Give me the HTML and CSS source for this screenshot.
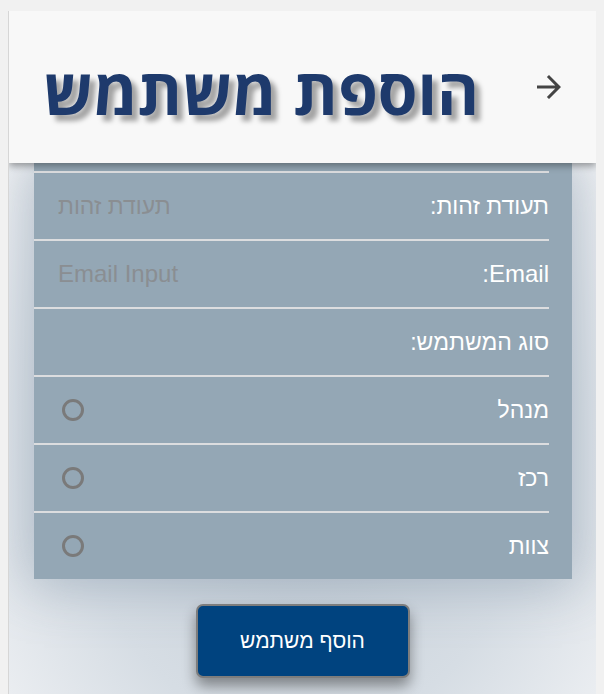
FILE: index.html
```html
<!DOCTYPE html>
<html lang="he" dir="rtl">
<head>
<meta charset="utf-8">
<title>הוספת משתמש</title>
<link rel="stylesheet" href="styles.css">
</head>
<body>
<div class="card">
  <header class="header">
    <button class="back" type="button" aria-label="חזרה">
      <svg viewBox="0 0 24 24" width="36" height="36"><path d="M12 4l-1.41 1.41L16.17 11H4v2h12.17l-5.58 5.59L12 20l8-8z"/></svg>
    </button>
    <h1 class="title">הוספת משתמש</h1>
  </header>
  <main class="content">
    <form class="form">
      <div class="row"><label class="label">תעודת זהות:</label><input class="field" type="text" placeholder="תעודת זהות"></div>
      <div class="row"><label class="label label-latin">Email:</label><input class="field field-latin" type="email" placeholder="Email Input"></div>
      <div class="row"><span class="label">סוג המשתמש:</span></div>
      <div class="row"><span class="label">מנהל</span><span class="radio"></span></div>
      <div class="row"><span class="label">רכז</span><span class="radio"></span></div>
      <div class="row"><span class="label">צוות</span><span class="radio"></span></div>
    </form>
    <button class="submit" type="button">הוסף משתמש</button>
  </main>
</div>
</body>
</html>
```

FILE: styles.css
```css
html, body {
  margin: 0;
  padding: 0;
}
body {
  background: #f1f1f1;
  padding: 11px 8px 0 8px;
  font-family: "Liberation Sans", Arial, sans-serif;
}
.card {
  background: #eef0f2;
  border-left: 1px solid #d6d6d6;
  min-height: 760px;
  display: flex;
  flex-direction: column;
  overflow: hidden;
}
.header {
  position: relative;
  z-index: 2;
  height: 152px;
  background: #f8f8f8;
  box-shadow: 0 3px 7px rgba(0, 0, 0, 0.35);
  display: flex;
  align-items: center;
  padding: 0 29px 0 0;
  gap: 52px;
}
.back {
  background: none;
  border: none;
  padding: 0;
  width: 36px;
  height: 36px;
  display: flex;
  align-items: center;
  justify-content: center;
  cursor: pointer;
}
.back svg {
  fill: #444;
  display: block;
}
.title {
  margin: 0;
  padding-top: 8px;
  font-family: "Open Sans", "DejaVu Sans", sans-serif;
  font-weight: 700;
  font-size: 64px;
  line-height: 1;
  color: #1e3a6c;
  text-shadow: 6px 6px 5px rgba(0, 0, 0, 0.35);
}
.content {
  flex: 1;
  display: flex;
  flex-direction: column;
  align-items: center;
  background: radial-gradient(ellipse 70% 80% at 50% 50%, #c3ccd5 0%, #d6dde4 55%, #f4f5f7 100%);
}
.form {
  align-self: stretch;
  margin: 0 24px 0 25px;
  padding: 8px 23px 0 0;
  background: #94a7b5;
  box-shadow: 0 0 50px 8px rgba(120, 140, 160, 0.45);
}
.row {
  height: 66px;
  border-top: 2px solid #dcdddf;
  display: flex;
  align-items: center;
  justify-content: space-between;
}
.label {
  color: #ffffff;
  font-size: 23px;
  white-space: nowrap;
}
.label-latin {
  font-size: 24px;
}
.field {
  flex: 1;
  min-width: 0;
  background: transparent;
  border: none;
  outline: none;
  font-family: "Liberation Sans", Arial, sans-serif;
  font-size: 23px;
  color: #333;
  text-align: left;
  padding: 0 0 0 24px;
}
.field-latin {
  font-size: 24px;
}
.field::placeholder {
  color: #8a8e92;
}
.radio {
  width: 16px;
  height: 16px;
  border: 3px solid #7a7a7a;
  border-radius: 50%;
  margin-left: 28px;
}
.submit {
  margin-top: 25px;
  width: 214px;
  height: 74px;
  background: #00437f;
  color: #fff;
  border: 2px solid #7d7d7d;
  border-radius: 7px;
  font-family: "Liberation Sans", Arial, sans-serif;
  font-size: 21px;
  box-shadow: 0 8px 14px rgba(0, 0, 0, 0.4);
  cursor: pointer;
}
```
